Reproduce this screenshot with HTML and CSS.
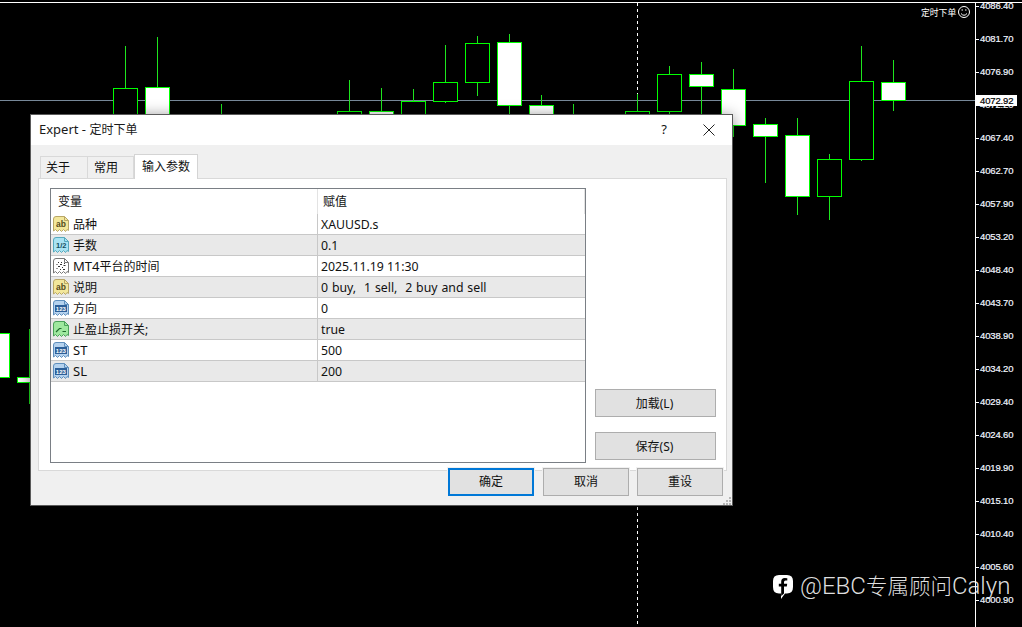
FILE: index.html
```html
<!DOCTYPE html>
<html lang="zh">
<head>
<meta charset="utf-8">
<title>Expert - 定时下单</title>
<link rel="stylesheet" href="styles.css">
</head>
<body>
<svg width="0" height="0" class="defs">
  <symbol id="doc" viewBox="0 0 16 16">
    <path d="M.5 3Q.5 .5 3 .5H11.500L15.500 4.500V14.500L14 13.500 12.500 15.500 10.500 13.500 8.500 15.500 6.500 13.500 4.500 15.500 2.500 13.500 .5 15Z"/>
    <path class="fold" d="M11.500 .5V4.500H15.500"/>
  </symbol>
</svg>
<main class="desktop">
  <svg class="chart" width="1022" height="627" viewBox="0 0 1022 627">
    <path class="frame" d="M0 2.5H1022M975.5 2V627"/>
    <path class="price" d="M0 100.5H975"/>
    <path class="dash" d="M637.5 3V627"/>
    <g class="wick">
      <path d="M125.5 46V88M157.5 37V87M221.5 104V114M349.5 80V111M381.5 88V111M413.5 89V101M445.5 45V103M477.5 36V96M509.5 34V114M541.5 95V105M573.5 104V114M637.5 94V111M669.5 66V114M701.5 62V114M733.5 69V137M765.5 118V183M797.5 118V215M829.5 154V220M861.5 46V161M893.5 60V111M29.5 329V404"/>
    </g>
    <g class="bear">
      <rect x="113.5" y="88.5" width="24" height="40"/>
      <rect x="337.5" y="111.5" width="24" height="20"/>
      <rect x="401.5" y="101.5" width="24" height="20"/>
      <rect x="433.5" y="82.5" width="24" height="19"/>
      <rect x="465.5" y="43.5" width="24" height="39"/>
      <rect x="625.5" y="111.5" width="24" height="20"/>
      <rect x="657.5" y="74.5" width="24" height="37"/>
      <rect x="817.5" y="159.5" width="24" height="37"/>
      <rect x="849.5" y="81.5" width="24" height="78"/>
    </g>
    <g class="bull">
      <rect x="145.5" y="87.5" width="24" height="40"/>
      <rect x="369.5" y="111.5" width="24" height="20"/>
      <rect x="497.5" y="42.5" width="24" height="63"/>
      <rect x="529.5" y="105.5" width="24" height="20"/>
      <rect x="689.5" y="74.5" width="24" height="12"/>
      <rect x="721.5" y="89.5" width="24" height="36"/>
      <rect x="753.5" y="124.5" width="24" height="12"/>
      <rect x="785.5" y="135.5" width="24" height="61"/>
      <rect x="881.5" y="82.5" width="24" height="18"/>
      <rect x="-14.5" y="333.5" width="24" height="44"/>
      <rect x="17.5" y="377.5" width="24" height="5"/>
    </g>
    <path class="tick" d="M975 6.5H979M975 39.5H979M975 72.5H979M975 105.5H979M975 138.5H979M975 171.5H979M975 204.5H979M975 237.5H979M975 270.5H979M975 303.5H979M975 336.5H979M975 369.5H979M975 402.5H979M975 435.5H979M975 468.5H979M975 501.5H979M975 534.5H979M975 567.5H979M975 600.5H979"/>
    <g class="axis">
      <text x="980" y="9">4086.40</text>
      <text x="980" y="42">4081.70</text>
      <text x="980" y="75">4076.90</text>
      <text x="980" y="108">4072.20</text>
      <text x="980" y="141">4067.40</text>
      <text x="980" y="174">4062.70</text>
      <text x="980" y="207">4057.90</text>
      <text x="980" y="240">4053.20</text>
      <text x="980" y="273">4048.40</text>
      <text x="980" y="306">4043.70</text>
      <text x="980" y="339">4038.90</text>
      <text x="980" y="372">4034.20</text>
      <text x="980" y="405">4029.40</text>
      <text x="980" y="438">4024.60</text>
      <text x="980" y="471">4019.90</text>
      <text x="980" y="504">4015.10</text>
      <text x="980" y="537">4010.40</text>
      <text x="980" y="570">4005.60</text>
      <text x="980" y="603">4000.90</text>
    </g>
    <rect class="price-box" x="976" y="95" width="41" height="11"/>
    <text class="price-text" x="980" y="104">4072.92</text>
    <text class="ea-name" x="921" y="16">定时下单</text>
    <g class="smile">
      <circle cx="964" cy="12" r="5.500"/>
      <path d="M961 13.500Q964 17 967 13.500M961.500 10H963M965 10H966.500"/>
    </g>
  </svg>

  <section class="dialog">
    <header class="titlebar">
      <h1 class="title"><span class="lat">Expert - </span>定时下单</h1>
      <span class="help">?</span>
      <svg class="close" width="12" height="12" viewBox="0 0 12 12"><path d="M.5 .5L11.5 11.5M11.5 .5L.5 11.5"/></svg>
    </header>
    <div class="body">
      <nav class="tabs">
        <span class="tab tab-first">关于</span>
        <span class="tab tab-second">常用</span>
        <span class="tab tab-active">输入参数</span>
      </nav>
      <div class="panel">
        <div class="table">
          <div class="thead">
            <span class="th-name">变量</span>
            <span class="th-value">赋值</span>
          </div>
          <div class="row"><span class="name"><svg class="icon i-str" width="16" height="16"><use href="#doc"/><text class="glyph g-dark" x="3" y="11">ab</text></svg>品种</span><span class="value">XAUUSD.s</span></div>
          <div class="row alt"><span class="name"><svg class="icon i-dbl" width="16" height="16"><use href="#doc"/><text class="glyph g-tiny" x="3" y="10.500">1/2</text></svg>手数</span><span class="value">0.1</span></div>
          <div class="row"><span class="name"><svg class="icon i-time" width="16" height="16"><use href="#doc"/><path class="clock" d="M5 4.500h1M8 4.500h1M11 5.500h1M3.500 6.500h1M7 6.500h2M10.500 7.500h2M5 8.500h2M9 9.500h1M3.500 10.500h1M7 11.500h1M10 11.500h2"/></svg><span class="lat">MT4</span>平台的时间</span><span class="value">2025.11.19 11:30</span></div>
          <div class="row alt"><span class="name"><svg class="icon i-str" width="16" height="16"><use href="#doc"/><text class="glyph g-dark" x="3" y="11">ab</text></svg>说明</span><span class="value value-spaced">0 buy,&nbsp; 1 sell,&nbsp; 2 buy and sell</span></div>
          <div class="row"><span class="name"><svg class="icon i-int" width="16" height="16"><use href="#doc"/><rect class="plate" x="2" y="5" width="12" height="7"/><text class="glyph g-num" x="2.800" y="10.800">123</text></svg>方向</span><span class="value">0</span></div>
          <div class="row alt"><span class="name"><svg class="icon i-bool" width="16" height="16"><use href="#doc"/><path class="flag" d="M3 11L6.500 7.500H8.500M9.500 10.500H13"/></svg>止盈止损开关;</span><span class="value">true</span></div>
          <div class="row"><span class="name"><svg class="icon i-int" width="16" height="16"><use href="#doc"/><rect class="plate" x="2" y="5" width="12" height="7"/><text class="glyph g-num" x="2.800" y="10.800">123</text></svg><span class="lat">ST</span></span><span class="value">500</span></div>
          <div class="row alt"><span class="name"><svg class="icon i-int" width="16" height="16"><use href="#doc"/><rect class="plate" x="2" y="5" width="12" height="7"/><text class="glyph g-num" x="2.800" y="10.800">123</text></svg><span class="lat">SL</span></span><span class="value">200</span></div>
        </div>
        <div class="side">
          <button class="btn btn-side" type="button">加载(L)</button>
          <button class="btn btn-side" type="button">保存(S)</button>
        </div>
      </div>
      <div class="actions">
        <button class="btn btn-action btn-default" type="button">确定</button>
        <button class="btn btn-action" type="button">取消</button>
        <button class="btn btn-action" type="button">重设</button>
      </div>
      <svg class="grip" width="8" height="8" viewBox="0 0 8 8"><path d="M6 0h2v2h-2zM3 3h2v2h-2zM6 3h2v2h-2zM0 6h2v2h-2zM3 6h2v2h-2zM6 6h2v2h-2z"/></svg>
    </div>
  </section>

  <div class="watermark">
    <svg class="fb" width="22" height="26" viewBox="0 0 22 26"><path fill-rule="evenodd" d="M7 1H15Q21 1 21 7V13Q21 19.500 15 19.500H13L9 25V19.500H7Q1 19.500 1 13V7Q1 1 7 1ZM12 19.500V12.500H14.800L15.200 9.700H12V8Q12 6.500 13.500 6.500H15.300V4.200Q14 4 12.800 4Q9.200 4 9.200 7.700V9.700H6.800V12.500H9.200V22Z"/></svg>
    <span class="mark-text">@EBC<span class="mark-cjk">专属顾问</span>Calyn</span>
  </div>
</main>
</body>
</html>
```

FILE: styles.css
```css
* { box-sizing: border-box; }
html, body { margin: 0; padding: 0; background: #000; overflow: hidden; }
.defs { position: absolute; }
.desktop { position: relative; width: 1022px; height: 627px; overflow: hidden; background: #000; font-family: "Noto Sans", "Noto Sans CJK SC", sans-serif; font-size: 12px; color: #111; }
.lat { font-size: 13px; }

/* chart */
.chart { position: absolute; left: 0; top: 0; display: block; }
.chart path, .chart rect { shape-rendering: crispEdges; }
.frame { stroke: #fff; fill: none; }
.price { stroke: #778899; fill: none; }
.dash { stroke: #fff; stroke-dasharray: 3 3; fill: none; }
.wick path { stroke: #1ee61e; fill: none; }
.bear rect { fill: #000; stroke: #0f0; }
.bull rect { fill: #fff; stroke: #0f0; }
.tick { stroke: #fff; fill: none; }
.axis text { fill: #f2f6ff; stroke: #f2f6ff; stroke-width: .2px; font: 9.500px "Liberation Sans", sans-serif; letter-spacing: -.15px; }
.price-box { fill: #fff; }
.price-text { fill: #000; stroke: #000; stroke-width: .2px; font: 9.500px "Liberation Sans", sans-serif; letter-spacing: -.15px; }
.ea-name { fill: #fff; font: 8.800px "Noto Sans CJK SC", sans-serif; }
.chart .smile circle, .chart .smile path { fill: none; stroke: #fff; shape-rendering: auto; }

/* dialog */
.dialog { position: absolute; left: 30px; top: 114px; width: 703px; height: 392px; display: flex; flex-direction: column; background: #f0f0f0; border: 1px solid #5a5a5a; box-shadow: 0 2px 14px rgba(0, 0, 0, .45); }
.titlebar { height: 30px; flex: none; display: flex; align-items: center; background: #fff; padding: 0 17px 2px 8px; }
.title { margin: 0; flex: 1; font-size: 12px; font-weight: 400; color: #1a1a1a; }
.help { width: 12px; margin-right: 33px; font-size: 13px; text-align: center; }
.close { display: block; margin-top: 2px; }
.close path { stroke: #222; stroke-width: 1; fill: none; }

.body { position: relative; flex: 1; min-height: 0; display: flex; flex-direction: column; padding-top: 9px; }
.tabs { height: 24px; flex: none; display: flex; align-items: flex-end; padding-left: 9px; }
.tab { display: flex; align-items: center; border: 1px solid #d9d9d9; border-bottom: 0; background: #f0f0f0; height: 22px; padding: 0 0 2px 5px; color: #111; }
.tab-first { width: 48px; }
.tab-second { width: 46px; border-left: 0; padding-left: 6px; }
.tab-active { position: relative; z-index: 1; width: 64px; height: 25px; margin-bottom: -1px; padding: 0 0 2px 7px; background: #fff; border-color: #d4d4d4; border-left: 1px solid #d4d4d4; }

.panel { flex: none; width: 689px; height: 293px; margin-left: 7px; display: flex; padding: 9px 10px 7px 11px; background: #fff; border: 1px solid #d9d9d9; }
.table { width: 536px; height: 275px; flex: none; border: 1px solid #7a7f85; background: #fff; }
.thead { height: 25px; display: flex; align-items: stretch; }
.th-name { width: 267px; padding: 0 0 2px 7px; border-right: 1px solid #e3e3e3; display: flex; align-items: center; }
.th-value { flex: 1; padding: 0 0 2px 5px; border-right: 1px solid #e3e3e3; display: flex; align-items: center; }
.row { height: 21px; display: flex; align-items: center; border-bottom: 1px solid #c8c8c8; background: #fff; }
.row.alt { background: #e9e9e9; }
.name { width: 267px; height: 100%; display: flex; align-items: center; padding-left: 2px; border-right: 1px solid #c8c8c8; white-space: nowrap; color: #111; }
.value { padding-left: 3px; font-size: 12.300px; white-space: nowrap; color: #111; }
.value-spaced { word-spacing: .7px; }

.icon { flex: none; margin-right: 4px; display: block; }
.icon use { stroke: #888; fill: #ddd; stroke-width: 1; }
.i-str use { fill: #f3e79b; stroke: #b9a766; }
.i-dbl use { fill: #a9e3f2; stroke: #56a9bd; }
.i-time use { fill: #fff; stroke: #777; }
.i-int use { fill: #b5d2ee; stroke: #5f8fbd; }
.i-bool use { fill: #9fe89f; stroke: #4aa05a; }
.fold { fill: none; }
.glyph { font-family: "Liberation Sans", sans-serif; }
.g-dark { font-size: 8.500px; font-weight: 700; fill: #554c1c; }
.g-tiny { font-size: 7.500px; font-weight: 700; fill: #14505f; }
.plate { fill: #2c5f99; }
.g-num { font-size: 6px; font-weight: 700; fill: #fff; }
.clock { stroke: #333; fill: none; }
.flag { stroke: #1d6b2d; fill: none; stroke-width: 1.200; }

.side { margin-left: 9px; width: 121px; display: flex; flex-direction: column; justify-content: flex-end; gap: 15px; padding-bottom: 3px; }
.btn { display: block; padding: 0 0 2px; margin: 0; font: inherit; color: #111; background: #e1e1e1; border: 1px solid #adadad; border-radius: 0; }
.btn-side { width: 121px; height: 28px; padding: 0 2px 1px 0; }
.actions { position: relative; z-index: 1; flex: none; display: flex; justify-content: flex-end; gap: 8px; padding-right: 9px; margin-top: -3px; }
.btn-action { width: 86px; height: 28px; outline: 1px solid #f0f0f0; }
.btn-default { border: 2px solid #0078d7; margin-right: 1px; }
.grip { position: absolute; right: 1px; bottom: 0; }
.grip path { fill: #b5b5b5; }

/* watermark */
.watermark { position: absolute; left: 772px; top: 574px; display: flex; align-items: flex-start; gap: 6px; }
.fb { display: block; flex: none; }
.fb path { fill: #fff; }
.mark-text { margin-top: -1px; font-family: Roboto, sans-serif; font-size: 24px; line-height: 24px; font-weight: 300; color: rgba(255, 255, 255, .88); white-space: nowrap; }
.mark-cjk { font-family: "Noto Sans CJK SC", sans-serif; font-size: 21.500px; }
```
